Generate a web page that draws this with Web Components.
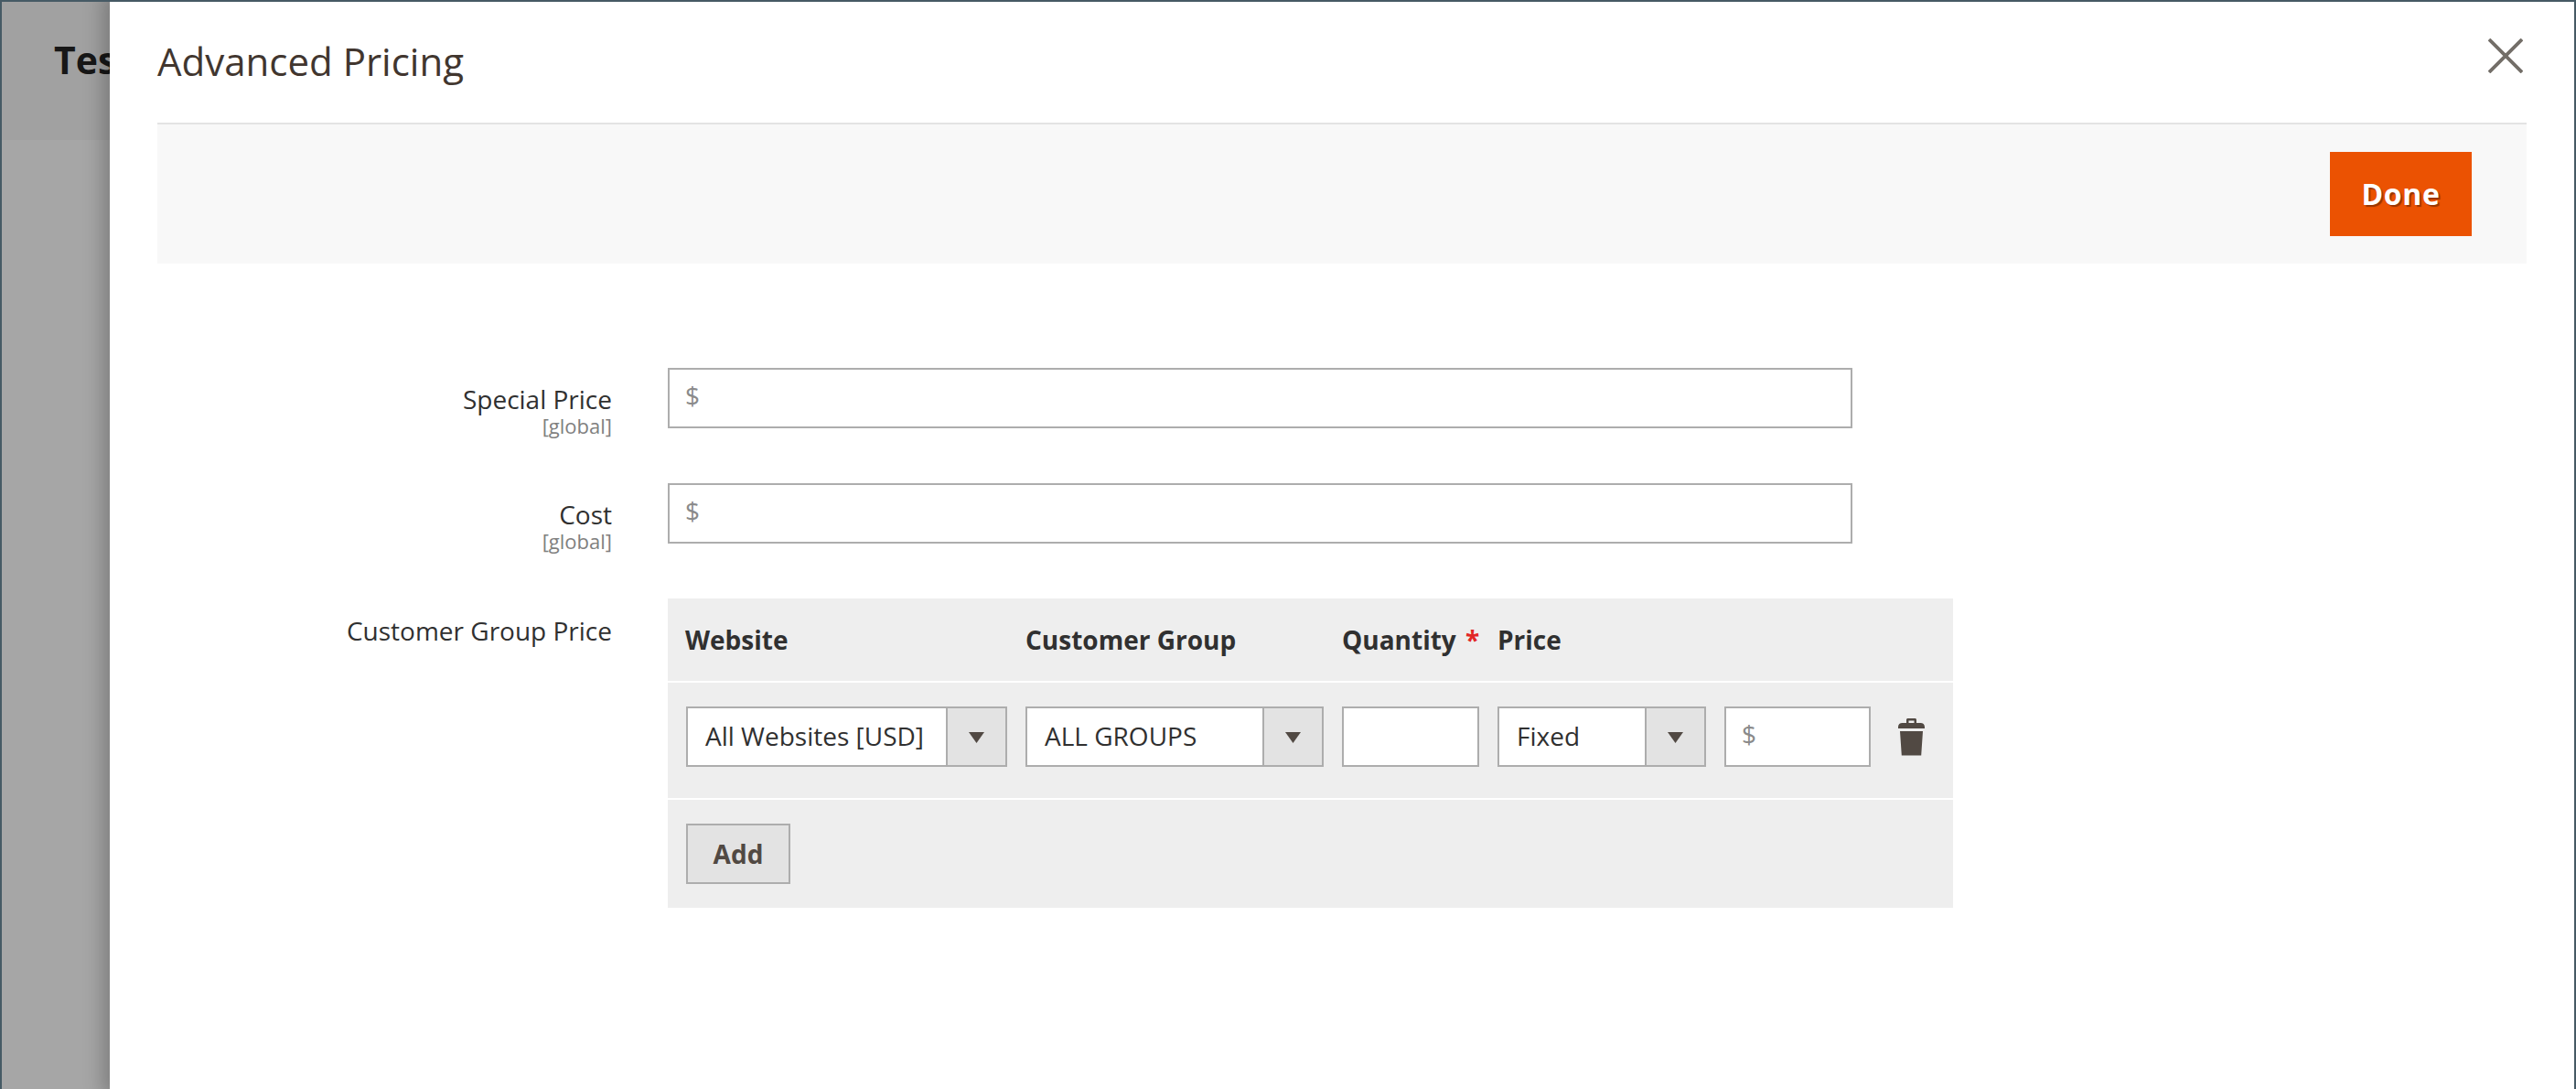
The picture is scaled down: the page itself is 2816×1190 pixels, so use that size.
<!DOCTYPE html>
<html lang="en"><head><meta charset="utf-8"><title>Advanced Pricing</title>
<style>
html,body{margin:0;padding:0;width:2816px;height:1190px;overflow:hidden;background:#a6a6a6;font-family:"Open Sans",sans-serif}
</style></head><body>
<x-app>
  <x-page-behind slot="behind">Tes</x-page-behind>
  <x-modal heading="Advanced Pricing">
    <x-field label="Special Price" scope="[global]"><x-price-input></x-price-input></x-field>
    <x-field label="Cost" scope="[global]"><x-price-input></x-price-input></x-field>
    <x-field label="Customer Group Price" tall>
      <x-tier-table>
        <x-select style="--w:351px;--split:65px">All Websites [USD]</x-select>
        <x-select style="--w:326px;--split:65px">ALL GROUPS</x-select>
        <x-plain-input></x-plain-input>
        <x-select style="--w:228px;--split:65px">Fixed</x-select>
        <x-price-input compact></x-price-input>
      </x-tier-table>
    </x-field>
  </x-modal>
</x-app>
<script>
function def(name, css, html){
  customElements.define(name, class extends HTMLElement{
    constructor(){super();const r=this.attachShadow({mode:'open'});r.innerHTML='<style>'+css+'</style>'+(typeof html==='function'?html(this):html);}
  });
}
def('x-app',`
  :host{display:block;position:relative;width:2816px;height:1190px;box-sizing:border-box;border:solid #465a65;border-width:2px 2px 0 2px;overflow:hidden;background:#a6a6a6}
`,`<slot name="behind"></slot><slot></slot>`);
def('x-page-behind',`
  :host{display:block;height:151px;background:#a1a1a1;box-sizing:border-box;padding:33px 0 0 57px;font:700 41px/60px "Open Sans",sans-serif;color:#171717}
`,`<slot></slot>`);
def('x-modal',`
  :host{display:block;position:absolute;left:118px;top:0;right:0;bottom:0;background:#fff;box-shadow:0 0 20px 8px rgba(0,0,0,.24);padding:0 52px 0 52px;color:#303030}
  header{height:132px;display:flex;justify-content:space-between;align-items:flex-start;border-bottom:2px solid #e3e3e3;box-sizing:content-box}
  h1{margin:36px 0 0;font:400 42px/58px "Open Sans",sans-serif;color:#41362f}
  svg{display:block;margin:40px 4px 0 0}
  .bar{height:152px;background:#f8f8f8;box-sizing:border-box;padding:30px 60px 0 0;display:flex;justify-content:flex-end;align-items:flex-start}
  button{all:unset;box-sizing:border-box;width:155px;height:92px;background:#eb5202;color:#fff;font:700 32px/92px "Open Sans",sans-serif;text-align:center;letter-spacing:.6px;text-shadow:2px 2px 1px rgba(0,0,0,.35)}
  main{display:flex;flex-direction:column;gap:60px;padding-top:114px}
`,(el)=>`<header><h1>${el.getAttribute('heading')}</h1>
  <svg width="38" height="38" viewBox="0 0 38 38" fill="none" stroke="#736e68" stroke-width="3.8"><path d="M1 1L37 37M37 1L1 37"/></svg></header>
  <div class="bar"><button>Done</button></div><main><slot></slot></main>`);
def('x-field',`
  :host{display:grid;grid-template-columns:497px 1fr;column-gap:61px}
  .l{text-align:right;font:400 28px/38px "Open Sans",sans-serif;color:#303030;padding-top:15px;height:51px}
  :host([tall]) .l{padding-top:16px}
  small{display:block;font-size:22px;line-height:22px;color:#808080;margin-top:-1px}
`,(el)=>{const s=el.getAttribute('scope');return `<div class="l">${el.getAttribute('label')}${s?`<small>${s}</small>`:''}</div><div><slot></slot></div>`});
def('x-price-input',`
  :host{display:block;box-sizing:border-box;width:1295px;height:66px;background:#fff;border:2px solid #adadad;padding-left:17px;font:400 28px/56px "Open Sans",sans-serif;color:#8a8a8a}
  :host([compact]){width:160px}
`,`$`);
def('x-plain-input',`
  :host{display:block;box-sizing:border-box;width:150px;height:66px;background:#fff;border:2px solid #adadad}
`,``);
def('x-select',`
  :host{display:flex;box-sizing:border-box;width:var(--w);height:66px;background:#fff;border:2px solid #adadad;font:400 28px/60px "Open Sans",sans-serif;color:#303030}
  .t{flex:1;padding-left:19px;white-space:nowrap;min-width:0}
  .b{box-sizing:border-box;flex:none;width:var(--split);border-left:2px solid #adadad;background:#e3e3e3;display:flex;align-items:center;justify-content:center}
  svg{display:block;margin-top:2px}
`,`<span class="t"><slot></slot></span><span class="b"><svg width="17" height="12" viewBox="0 0 17 12"><path d="M0 0H17L8.500 12Z" fill="#514943"/></svg></span>`);
def('x-tier-table',`
  :host{display:block;width:1405px;background:#fff;color:#303030}
  .row{display:grid;grid-template-columns:351px 326px 150px 228px 160px 59px;column-gap:20px;background:#eee;padding:0 0 0 20px;box-sizing:border-box}
  .head{height:90px;font:700 28px/90px "Open Sans",sans-serif;align-items:start}
  .head span:first-child{margin-left:-1px}
  i{font-style:normal;color:#e22626;margin-left:3px}
  .q{white-space:nowrap}
  .body{height:126px;margin-top:2px;align-items:start;padding-top:26px}
  .foot{display:block;height:118px;margin-top:2px;background:#eee;padding:26px 0 0 20px;box-sizing:border-box}
  button{all:unset;display:block;box-sizing:border-box;width:114px;height:66px;background:#e3e3e3;border:2px solid #adadad;color:#514943;font:700 28px/60px "Open Sans",sans-serif;text-align:center}
  svg{display:block;margin:13px 0 0 10px}
`,`<div class="row head"><span>Website</span><span>Customer Group</span><span class="q">Quantity<i> *</i></span><span>Price</span></div>
  <div class="row body"><slot></slot>
    <svg width="29" height="41" viewBox="0 0 29 41"><path fill="#514943" d="M9 5V1.600C9 .7 9.700 0 10.600 0h7.800c.9 0 1.600.7 1.600 1.600V5h4.500c2.500 0 4.500 1.500 4.500 4.300V11H0V9.300C0 6.500 2 5 4.500 5ZM11.500 5h6V2.500h-6ZM2 14H27L25.200 40.500H3.800Z"/></svg>
  </div>
  <div class="foot"><button>Add</button></div>`);
</script>
</body></html>
